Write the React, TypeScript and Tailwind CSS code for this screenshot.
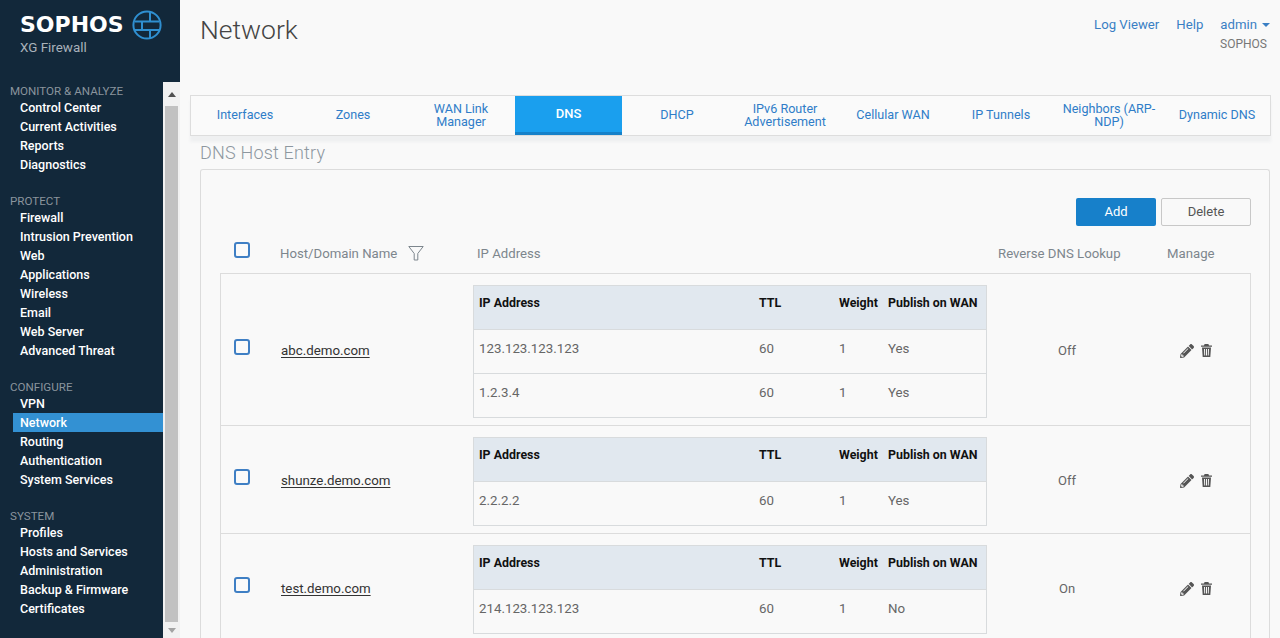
import { FaPencilAlt } from 'react-icons/fa';

const navSections = [
  { title: 'MONITOR & ANALYZE', items: ['Control Center', 'Current Activities', 'Reports', 'Diagnostics'] },
  { title: 'PROTECT', items: ['Firewall', 'Intrusion Prevention', 'Web', 'Applications', 'Wireless', 'Email', 'Web Server', 'Advanced Threat'] },
  { title: 'CONFIGURE', items: ['VPN', 'Network', 'Routing', 'Authentication', 'System Services'] },
  { title: 'SYSTEM', items: ['Profiles', 'Hosts and Services', 'Administration', 'Backup & Firmware', 'Certificates'] },
];

const tabs = ['Interfaces', 'Zones', 'WAN Link Manager', 'DNS', 'DHCP', 'IPv6 Router Advertisement', 'Cellular WAN', 'IP Tunnels', 'Neighbors (ARP-NDP)', 'Dynamic DNS'];

const hosts = [
  { name: 'abc.demo.com', reverse: 'Off', rows: [['123.123.123.123', '60', '1', 'Yes'], ['1.2.3.4', '60', '1', 'Yes']] },
  { name: 'shunze.demo.com', reverse: 'Off', rows: [['2.2.2.2', '60', '1', 'Yes']] },
  { name: 'test.demo.com', reverse: 'On', rows: [['214.123.123.123', '60', '1', 'No']] },
];

function Logo() {
  return (
    <svg width="30" height="30" viewBox="0 0 30 30" fill="none" stroke="#2f8fd0" strokeWidth="2">
      <circle cx="15" cy="15" r="13.6" />
      <path d="M3 11.5h24M3 20h24M18 2v9.5M10 11.5V20M18 20v8.5" />
    </svg>
  );
}

function TrashIcon() {
  return (
    <svg width="11" height="13" viewBox="0 0 11 13" fill="#555">
      <path d="M3.6 0h3.8l.6 1.4H11v1.3H0V1.4h3z" />
      <path
        fillRule="evenodd"
        d="M1 3.5h9l-.7 9.5H1.7zM3 5l.3 6.6h.9L4 5zm2 0v6.6h1V5zm2 0l-.2 6.6h.9L8 5z"
      />
    </svg>
  );
}

function Checkbox() {
  return <span className="block h-4 w-4 rounded-[3px] border-2 border-[#3f7fc4] bg-[#fafafa]" />;
}

function IpTable({ rows }: { rows: string[][] }) {
  return (
    <div className="w-[514px] border border-b-0 border-[#d8dbdd] text-[13.3px]">
      <div className="grid h-[44px] grid-cols-[280px_80px_49px_1fr] border-b border-[#d8dbdd] bg-[#e1e8ef] pl-[5px] pt-[8px] text-[12.4px] font-bold text-[#111]">
        <span>IP Address</span>
        <span>TTL</span>
        <span>Weight</span>
        <span>Publish on WAN</span>
      </div>
      {rows.map((r, i) => (
        <div key={i} className="grid h-[44px] grid-cols-[280px_80px_49px_1fr] items-center border-b border-[#d8dbdd] pb-[6px] pl-[5px] text-[#666]">
          {r.map((c, j) => (
            <span key={j}>{c}</span>
          ))}
        </div>
      ))}
    </div>
  );
}

export default function App() {
  return (
    <div className="flex h-[638px] w-[1280px] overflow-hidden bg-[#f9f9f9] font-['Roboto',sans-serif]">
      <aside className="flex w-[180px] shrink-0 flex-col bg-[#12283a]">
        <div className="h-[82px] pl-[20px] pt-[10px]">
          <div className="flex h-[30px] items-center gap-[10px]">
            <span className="w-[102px] shrink-0 font-['DejaVu_Sans',sans-serif] text-[22px] font-bold leading-[30px] text-white">SOPHOS</span>
            <Logo />
          </div>
          <div className="text-[13.4px] leading-[15px] text-[#a9b2ba]">XG Firewall</div>
        </div>
        <div className="flex min-h-0 flex-1">
          <nav className="w-[163px]">
            {navSections.map((s) => (
              <div key={s.title} className="mb-[18px]">
                <div className="h-[16px] pl-[10px] text-[11.6px] leading-[18px] text-[#8a949d]">{s.title}</div>
                {s.items.map((item) => (
                  <div
                    key={item}
                    className={
                      item === 'Network'
                        ? 'ml-[13px] h-[19px] bg-[#3391d3] pl-[7px] text-[12.5px] font-medium leading-[19px] text-white'
                        : 'ml-[13px] h-[19px] pl-[7px] text-[12.5px] font-medium leading-[19px] text-white'
                    }
                  >
                    {item}
                  </div>
                ))}
              </div>
            ))}
          </nav>
          <div className="flex w-[17px] flex-col items-center bg-[#f1f1f1]">
            <div className="flex h-[24px] items-center justify-center">
              <span className="h-0 w-0 border-x-[4px] border-b-[5px] border-x-transparent border-b-[#505050]" />
            </div>
            <div className="w-[13px] flex-1 bg-[#c1c1c1]" />
            <div className="flex h-[16px] items-center justify-center">
              <span className="h-0 w-0 border-x-[4px] border-t-[5px] border-x-transparent border-t-[#a3a3a3]" />
            </div>
          </div>
        </div>
      </aside>

      <main className="min-w-0 flex-1">
        <header className="flex h-[95px] justify-between pl-[20px] pr-[10px]">
          <h1 className="pt-[12px] text-[26.5px] font-light leading-[36px] text-[#444]">Network</h1>
          <div className="pt-[16px] text-[13.2px] leading-[18px]">
            <div className="flex gap-[17px] text-[#3a7fc4]">
              <span>Log Viewer</span>
              <span>Help</span>
              <span className="flex items-center gap-[5px]">
                admin
                <span className="h-0 w-0 border-x-[4px] border-t-[4px] border-x-transparent border-t-[#3a7fc4]" />
              </span>
            </div>
            <div className="mr-[3px] mt-[1px] text-right text-[12px] text-[#777]">SOPHOS</div>
          </div>
        </header>

        <div className="ml-[10px] mr-[9px] flex h-[41px] border border-[#ddd] bg-[#fafafa] shadow-[0_6px_3px_#eff0f1]">
          {tabs.map((t) => (
            <div
              key={t}
              className={
                t === 'DNS'
                  ? 'mr-[1px] flex w-[107px] shrink-0 items-center justify-center border-b-[3px] border-[#1681c9] bg-[#1a9fee] text-[13px] font-medium text-white'
                  : 'flex w-[108px] shrink-0 items-center justify-center px-[6px] pb-[2px] text-center text-[12.6px] leading-[13px] text-[#2f7dc8]'
              }
            >
              {t}
            </div>
          ))}
        </div>

        <div className="pl-[20px] pr-[10px]">
          <h2 className="pt-[6px] text-[18px] font-light leading-[22px] tracking-[0.2px] text-[#8d979f]">DNS Host Entry</h2>
          <section className="mt-[5px] rounded-t-[3px] border border-b-0 border-[#dcdcdc] pl-[19px] pr-[18px] pt-[28px]">
            <div className="flex justify-end gap-[5px]">
              <button className="h-[28px] w-[80px] rounded-[2px] bg-[#1780ca] text-[13px] text-white">Add</button>
              <button className="h-[28px] w-[90px] rounded-[2px] border border-[#c8c8c8] text-[13px] text-[#555]">Delete</button>
            </div>
            <div className="flex h-[47px] items-center pt-[8px] text-[13.2px] text-[#7d868d]">
              <span className="ml-[14px] -mt-[8px]"><Checkbox /></span>
              <span className="ml-[30px] flex w-[197px] shrink-0 items-center">
                Host/Domain Name
                <svg className="ml-[11px]" width="16" height="16" viewBox="0 0 16 16" fill="none" stroke="#7d868d">
                  <path d="M.8 1.5h14.4L9.8 8.5v6.5H6.2V8.5z" />
                </svg>
              </span>
              <span className="w-[521px] shrink-0">IP Address</span>
              <span className="w-[169px] shrink-0">Reverse DNS Lookup</span>
              <span>Manage</span>
            </div>
            <div className="border border-b-0 border-[#dcdcdc]">
              {hosts.map((h) => (
                <div key={h.name} className="flex items-center border-b border-[#dcdcdc] pb-[7px] pt-[11px]">
                  <span className="ml-[13px] -mt-[10px]"><Checkbox /></span>
                  <span className="ml-[31px] mb-[2px] w-[192px] shrink-0 text-[13.3px] text-[#333] underline underline-offset-2">{h.name}</span>
                  <IpTable rows={h.rows} />
                  <span className="mb-[2px] w-[160px] shrink-0 text-center text-[13px] text-[#666]">{h.reverse}</span>
                  <span className="mb-[2px] ml-[33px] flex items-center gap-[7px] text-[#555]">
                    <FaPencilAlt size={14} />
                    <TrashIcon />
                  </span>
                </div>
              ))}
            </div>
          </section>
        </div>
      </main>
    </div>
  );
}
